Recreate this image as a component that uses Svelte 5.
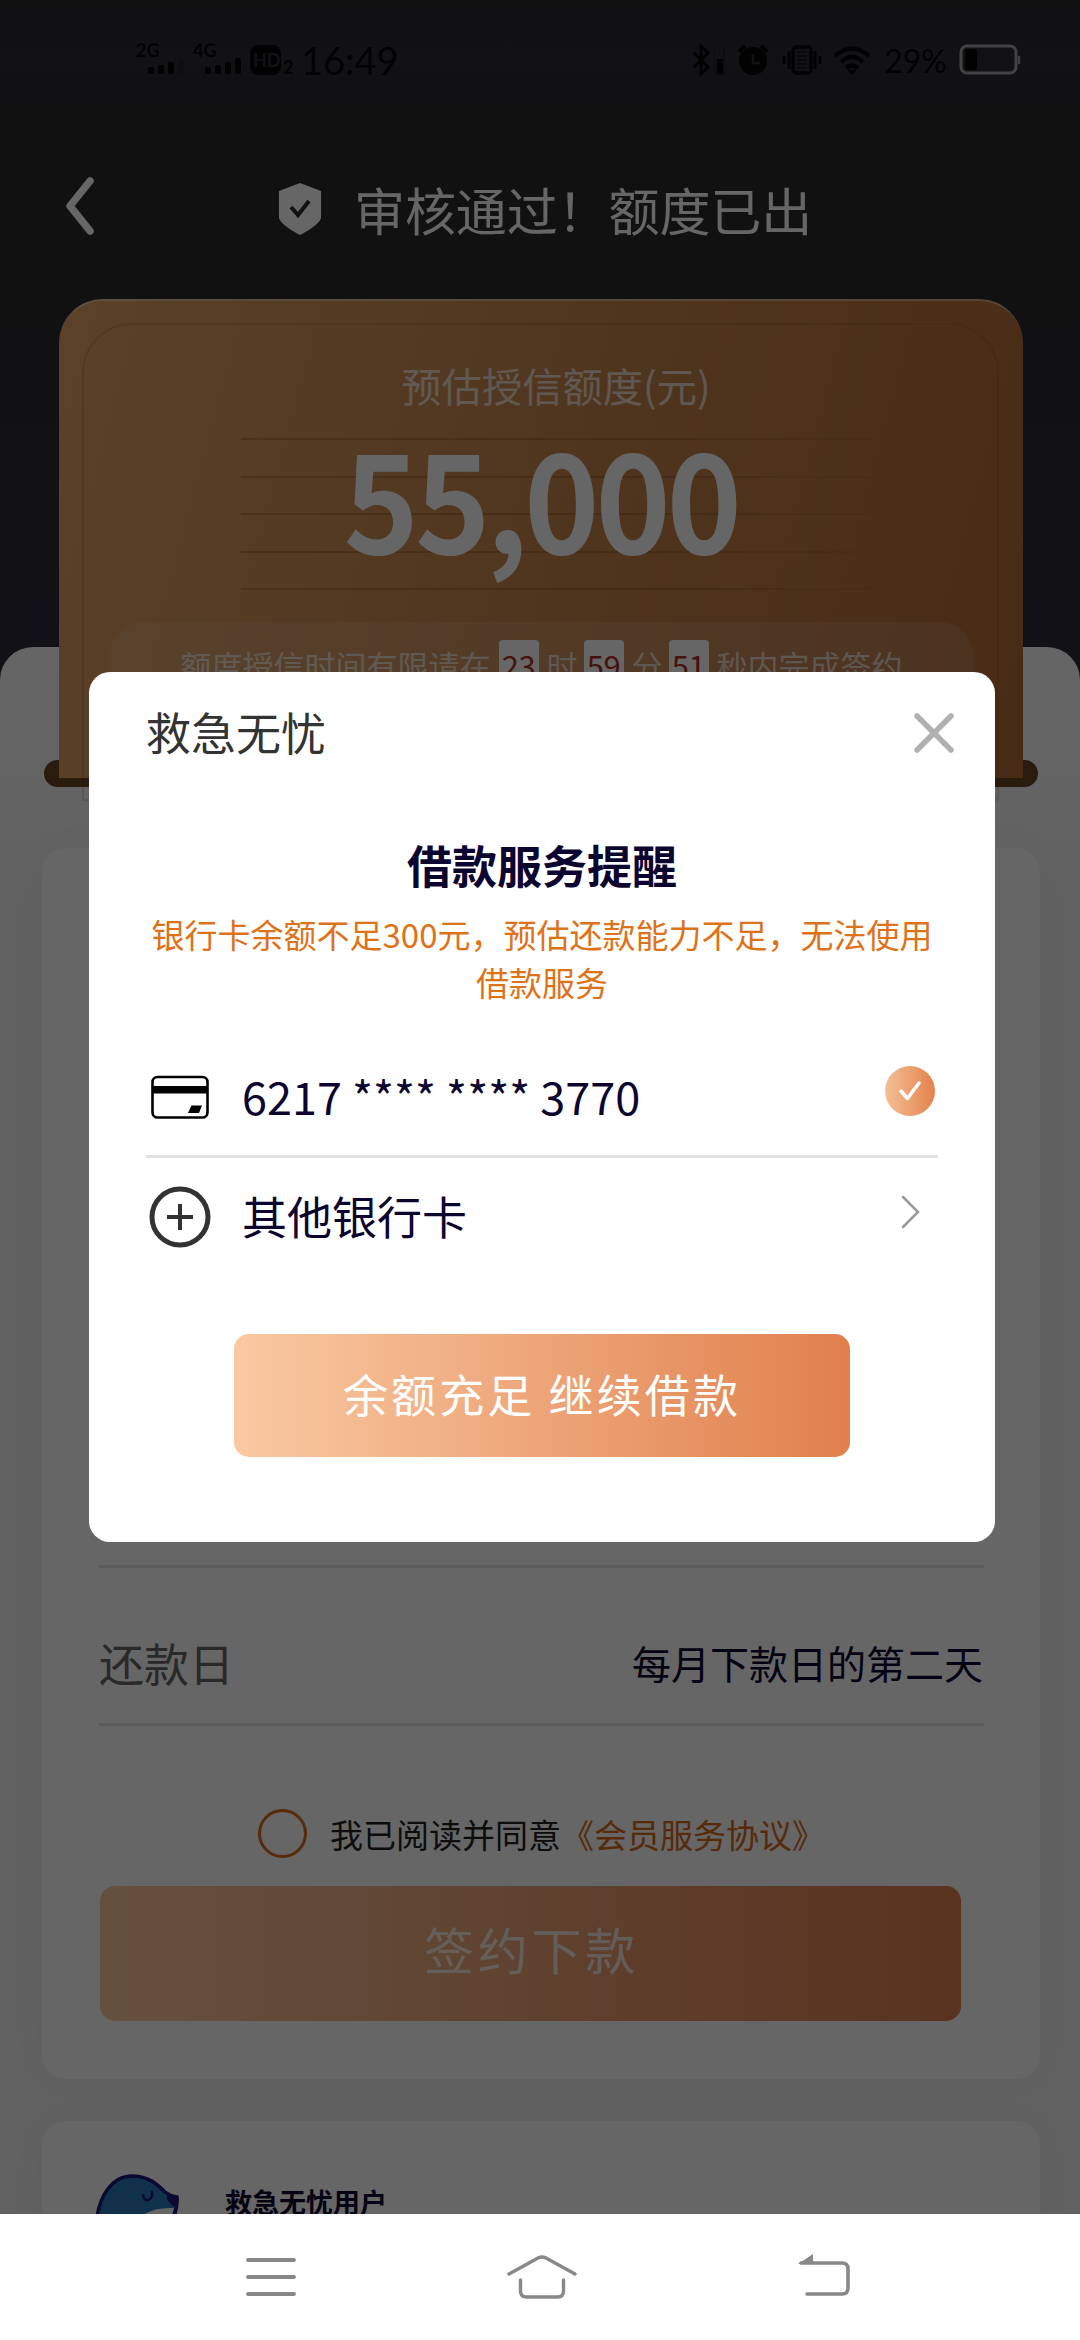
<script>
  const time = ['23', '59', '51'];
  const rules = [0, 1, 2, 3, 4];
</script>

<div class="screen">
  <div class="app">
    <div class="status">
      <svg class="sig" width="170" height="40" viewBox="0 0 170 40">
        <text x="0" y="17" class="net">2G</text>
        <g fill="#070709">
          <rect x="12" y="27" width="6" height="7" rx="2" /><rect x="22" y="25" width="6" height="9" rx="2" /><rect x="32" y="22" width="6" height="12" rx="2" />
          <rect x="69" y="27" width="6" height="7" rx="2" /><rect x="79" y="25" width="6" height="9" rx="2" /><rect x="89" y="22" width="6" height="12" rx="2" /><rect x="99" y="18" width="6" height="16" rx="2" />
          <rect x="114" y="5" width="31" height="30" rx="8" />
        </g>
        <rect x="42" y="19" width="6" height="15" rx="2" fill="#26262d" />
        <text x="57" y="17" class="net">4G</text>
        <text x="117" y="27" class="hd">HD</text>
        <text x="147" y="34" class="two">2</text>
      </svg>
      <span class="clock">16:49</span>
      <div class="right">
        <svg width="180" height="36" viewBox="0 0 180 36" fill="none" stroke="#070709">
          <path d="M2 11 16 25 9 32V4l7 7L2 25" stroke-width="3" />
          <rect x="23" y="6" width="9" height="26" stroke-width="1" stroke="#1b1b20" /><rect x="25" y="17" width="6" height="15" fill="#070709" stroke="none" />
          <circle cx="61" cy="19" r="14" fill="#070709" stroke="none" />
          <path d="m47 10 6-6M75 10l-6-6" stroke-width="4" /><path d="M61 12v9h7" stroke="#2c2c34" stroke-width="2.5" />
          <rect x="101" y="5" width="18" height="26" rx="3" stroke-width="3.5" /><path d="M105 10h10M105 14h10M105 18h10M105 22h10M105 26h10" stroke="#15151a" stroke-width="2" />
          <path d="M97 9v18M92 14v8M123 9v18M128 14v8" stroke-width="3" />
          <path d="M143 14q17-15 34 0M149 20q11-10 22 0M154 26q6-5 12 0" stroke-width="4.5" /><path d="m156 28 4 5 4-5z" fill="#070709" />
        </svg>
        <span class="pct">29%</span>
        <svg width="62" height="32" viewBox="0 0 62 32">
          <rect x="2" y="2" width="55" height="27" rx="6" fill="none" stroke="#a5a5a8" stroke-width="3" />
          <rect x="6" y="5" width="12" height="21" rx="2" fill="#070709" /><path d="M60 12v8" stroke="#a5a5a8" stroke-width="2" />
        </svg>
      </div>
    </div>

    <div class="head">
      <svg class="back" width="32" height="60" viewBox="0 0 32 60"><path d="M27 5 7 30l20 25" fill="none" stroke="#fff" stroke-width="7.5" stroke-linecap="round" stroke-linejoin="round" /></svg>
      <svg class="shield" width="42" height="52" viewBox="0 0 42 52">
        <path d="M21 0 42 8v27q-2 7-21 17Q2 42 0 35V8z" fill="#fff" />
        <path d="m12 24 7 8 11-14" fill="none" stroke="#2b2b30" stroke-width="4" />
      </svg>
      <h1>审核通过！额度已出</h1>
    </div>

    <div class="ticket">
      <div class="rod"></div>
      <div class="paper">
        <div class="label">预估授信额度(元)</div>
        <div class="amount">
          <div class="rules">{#each rules as r (r)}<i></i>{/each}</div>
          <b>55,000</b>
        </div>
        <div class="limit">
          <span>额度授信时间有限请在</span><em>{time[0]}</em><span>时</span><em>{time[1]}</em><span>分</span><em>{time[2]}</em><span>秒内完成签约</span>
        </div>
      </div>
      <div class="inner"></div>
    </div>

    <div class="sheet">
      <section class="card plan">
        <div class="line"></div>
        <div class="row"><span class="key">还款日</span><span class="val">每月下款日的第二天</span></div>
        <div class="line"></div>
        <div class="agree"><i></i><span>我已阅读并同意</span><a href="#terms">《会员服务协议》</a></div>
        <button class="sign">签约下款</button>
      </section>
      <section class="card user">
        <svg width="90" height="56" viewBox="0 0 90 56">
          <path d="M4 56C5 22 21 5 40 4c17-1 28 9 35 17q4 5 11 4 2 13-8 31z" fill="#2c78ba" />
          <path d="M44 48q12-14 38-13-2 8-8 21H40z" fill="#fff" />
          <path d="M4 56C5 22 21 3 40 3c17 0 26 9 33 16q5 4 12 5 1 16-9 29" fill="none" stroke="#20187a" stroke-width="3.5" />
          <path d="M75 21q4 4 10 3 2 4-1 10-5-1-9-8z" fill="#20187a" />
          <path d="M51 22q1 6 5 5 5-1 4-8" fill="none" stroke="#20187a" stroke-width="2.5" stroke-linecap="round" />
        </svg>
        <b>救急无忧用户</b>
      </section>
    </div>
  </div>

  <div class="mask">
    <div class="modal">
      <header>
        <span>救急无忧</span>
        <svg width="42" height="42" viewBox="0 0 42 42"><path d="m4 4 34 34M38 4 4 38" stroke="#b0b0b0" stroke-width="5.5" stroke-linecap="round" /></svg>
      </header>
      <h2>借款服务提醒</h2>
      <p>银行卡余额不足300元，预估还款能力不足，无法使用借款服务</p>
      <div class="opt first">
        <svg class="ico" width="62" height="62" viewBox="0 0 62 62">
          <rect x="3.5" y="11" width="55" height="40.500" rx="5" fill="none" stroke="#000" stroke-width="2.600" />
          <path d="M3 20h56v7.500H3z" /><path d="M42.500 39.500h10.500l-3 7.500H39z" />
        </svg>
        <span class="num">6217 **** **** 3770</span>
        <svg class="tick" width="52" height="52" viewBox="0 0 52 52">
          <defs><linearGradient id="tg"><stop offset="0" stop-color="#f4bf96" /><stop offset="1" stop-color="#e4824b" /></linearGradient></defs>
          <circle cx="26" cy="26" r="25" fill="url(#tg)" />
          <path d="m17 26 6.500 7.500L35 18" fill="none" stroke="#fff" stroke-width="3.500" stroke-linecap="round" stroke-linejoin="round" />
        </svg>
      </div>
      <div class="opt">
        <svg class="ico" width="62" height="62" viewBox="0 0 62 62" fill="none" stroke="#333"><circle cx="31" cy="31" r="28" stroke-width="5" /><path d="M18 31h26M31 18v26" stroke-width="4" /></svg>
        <span>其他银行卡</span>
        <svg class="arrow" width="22" height="36" viewBox="0 0 22 36"><path d="m3 3 15 15L3 33" fill="none" stroke="#999" stroke-width="2.500" stroke-linecap="round" /></svg>
      </div>
      <button class="go">余额充足 继续借款</button>
    </div>
  </div>

  <nav>
    <svg width="56" height="48" viewBox="0 0 56 48"><path d="M5 7h46M5 24h46M5 41h46" stroke="#888" stroke-width="3.800" stroke-linecap="round" /></svg>
    <svg class="home" width="72" height="48" viewBox="0 0 72 48" fill="none" stroke="#888" stroke-width="3.400" stroke-linecap="round"><path d="M3 21 32 5q4-2 8 0l29 16M14.500 27v11q0 6 6 6h31q6 0 6-6V27" /></svg>
    <svg width="56" height="48" viewBox="0 0 56 48" fill="none" stroke="#888" stroke-width="3.600"><path d="M5 10h41q6 0 6 6v19q0 6-6 6H11" stroke-linecap="round" /><path d="M2 11 17 1v10z" fill="#888" stroke="none" /></svg>
  </nav>
</div>

<style>
  :global(body) { margin: 0; }
  .screen { position: relative; width: 1080px; height: 2340px; overflow: hidden; background: #fff; font-family: 'Noto Sans CJK SC', sans-serif; }
  svg { display: block; flex: none; }
  button { border: 0; padding: 0; font-family: inherit; color: #fff; }
  .app { height: 2214px; overflow: hidden; background: linear-gradient(#2b2b2e 0, #2d2d37 60px, #2b2b2f 110px, #2b2b2f 300px, #2f2f38 640px, #2f2f38 100%); }
  .status { display: flex; align-items: center; height: 120px; box-sizing: border-box; padding: 0 59px 0 136px; }
  .net { font: 700 18px Lato, sans-serif; fill: #070709; }
  .hd { font: 700 18px Lato, sans-serif; fill: #2b2b32; }
  .two { font: 700 18px Lato, sans-serif; fill: #070709; }
  .clock { font: 38px Lato, sans-serif; color: #070709; margin-left: -5px; }
  .right { margin-left: auto; display: flex; align-items: center; }
  .pct { font: 32px Lato, sans-serif; color: #070709; margin: 1px 12px 0 12px; }
  .head { display: flex; align-items: center; height: 179px; box-sizing: border-box; padding: 0 0 0 63px; }
  .back { margin-top: -8px; }
  .shield { margin: 0 33px 0 184px; }
  h1 { margin: -2px 0 0; font-size: 51px; font-weight: 400; line-height: 60px; color: #fff; white-space: nowrap; letter-spacing: -.1px; }
  .shield { margin-top: -2px; }
  .ticket { position: relative; z-index: 1; width: 994px; height: 503px; margin-left: 44px; }
  .rod { position: absolute; left: 0; top: 461px; width: 994px; height: 27px; border-radius: 14px; background: #664423; }
  .paper { position: relative; margin: 0 15px; height: 479px; box-sizing: border-box; border-top: 2px solid #ffffff66; border-radius: 44px 44px 0 0; background: linear-gradient(105deg, #e2a465, #cc8a50 45%, #b46c36); display: flex; flex-direction: column; align-items: center; padding-top: 54px; }
  .inner { position: absolute; left: 38px; top: 24px; width: 917px; height: 478px; box-sizing: border-box; border: 2px solid #6b3a1229; border-radius: 50px 50px 0 0; }
  .label { font-size: 40.300px; line-height: 60px; color: #ffffffb8; margin-left: 30px; }
  .amount { display: grid; justify-items: center; align-items: center; height: 152px; margin-top: 23px; }
  .amount > * { grid-area: 1 / 1; }
  .rules { width: 632px; height: 152px; margin-left: 31px; display: flex; flex-direction: column; justify-content: space-between; }
  .rules i { height: 2px; background: linear-gradient(90deg, #7a471a58 60%, #7a471a20); }
  .amount b { font-weight: 700; font-size: 137px; line-height: 152px; letter-spacing: -4.100px; color: #fff; margin-top: -40px; transform: scaleX(.93); }
  .limit { display: flex; align-self: stretch; align-items: flex-start; justify-content: center; height: 90px; margin: 32px 50px 0 51px; border-radius: 34px; background: #ffffff1c; padding-top: 18px; box-sizing: border-box; font-size: 31px; line-height: 50px; color: #ffffffb0; }
  .limit em { font-style: normal; width: 40px; height: 50px; text-align: center; letter-spacing: -.5px; background: #fff; color: #b03020; border-radius: 4px; margin: 0 8px; }
  .limit em:nth-of-type(2), .limit em:nth-of-type(3) { margin-left: 6px; }
  .sheet { margin-top: -155px; height: 1567px; box-sizing: border-box; border-radius: 33px 33px 0 0; padding: 201px 40px 0 42px; background: linear-gradient(#fcfcfc, #f9f9f9 130px, #f4f4f4 260px); }
  .card { border-radius: 24px; background: #fff; box-shadow: 0 0 40px #00000008; }
  .plan { height: 1231px; box-sizing: border-box; padding: 0 56px 58px 57px; display: flex; flex-direction: column; justify-content: flex-end; }
  .line { height: 3px; background: #e4e4e4; }
  .row { display: flex; align-items: center; justify-content: space-between; height: 155px; padding: 34px 1px 0 0; box-sizing: border-box; }
  .key { font-size: 45px; color: #666; line-height: 60px; }
  .val { font-size: 39px; color: #0b0530; line-height: 60px; margin-top: -2px; }
  .agree { display: flex; align-items: center; height: 49px; margin: 83px 0 28px 159px; font-size: 33px; color: #222; white-space: nowrap; line-height: 44px; }
  .agree i { width: 49px; height: 49px; box-sizing: border-box; border: 3.500px solid #d96a18; border-radius: 50%; margin-right: 23px; }
  .agree a { color: #d96a18; text-decoration: none; }
  .sign { width: 861px; height: 135px; margin-left: 1px; padding: 0 0 11px 2px; border-radius: 15px; font-size: 50px; letter-spacing: 3.700px; background: linear-gradient(90deg, #fcc9a0, #e1804d); color: #ffffffc0; }
  .user { height: 200px; margin-top: 42px; padding: 52px 0 0 50px; display: flex; box-sizing: border-box; }
  .user b { font-size: 27px; line-height: 40px; color: #0b0530; margin: 9px 0 0 43px; }
  .mask { position: absolute; z-index: 2; left: 0; top: 0; width: 1080px; height: 2214px; background: #0009; display: flex; justify-content: center; align-items: flex-start; }
  .modal { margin: 672px 0 0 4px; width: 906px; height: 870px; box-sizing: border-box; padding: 0 57px; background: #fff; border-radius: 21px; display: flex; flex-direction: column; }
  header { height: 124px; display: flex; justify-content: space-between; align-items: center; font-size: 45px; line-height: 60px; color: #333; padding-bottom: 4px; box-sizing: border-box; }
  header svg { margin: 2px -17px 0 0; }
  h2 { margin: 39px 0 15px; font-size: 45px; line-height: 60px; color: #0b0530; text-align: center; }
  p { margin: 0; padding: 0 4px; font-size: 33px; line-height: 48px; text-align: center; color: #de7218; }
  .opt { display: flex; align-items: center; height: 118px; font-size: 45px; line-height: 60px; color: #0b0530; }
  .opt span { margin: -3px auto 0 31px; }
  .opt.first { margin-top: 35px; height: 117px; border-bottom: 3px solid #e3e3e3; box-sizing: border-box; padding-bottom: 2px; }
  .ico { margin-left: 3px; }
  .tick { margin: -12px 2px 0 0; }
  .arrow { margin: -11px 16px 0 0; }
  .go { width: 616px; height: 123px; margin: 58px 0 0 88px; padding-bottom: 4px; border-radius: 15px; font-size: 45px; letter-spacing: 3.100px; background: linear-gradient(90deg, #f9c9a2, #e1804d); }
  nav { height: 126px; display: flex; justify-content: space-between; align-items: center; padding: 0 228px 0 243px; }
  .home { margin-left: -12px; }
</style>
